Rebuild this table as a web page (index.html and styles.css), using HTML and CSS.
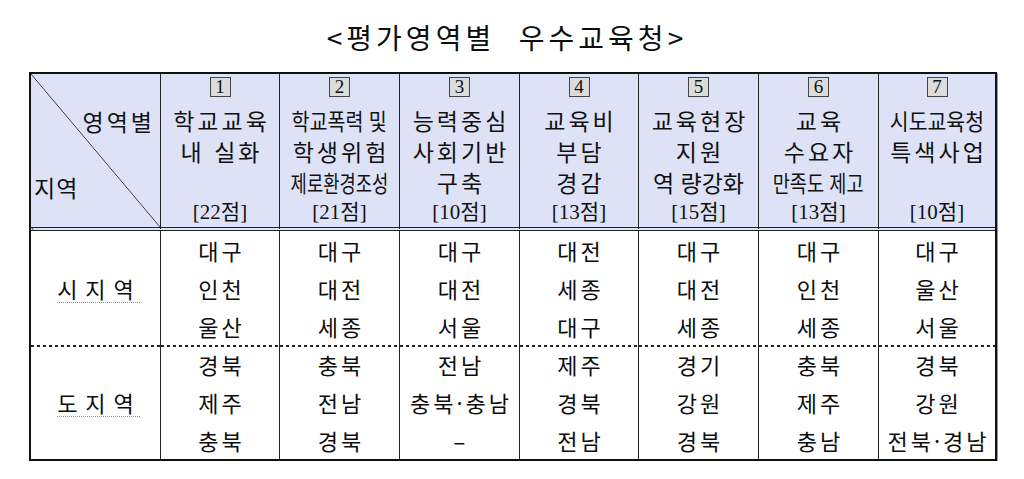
FILE: index.html
```html
<!DOCTYPE html>
<html lang="ko">
<head>
<meta charset="utf-8">
<title>평가영역별 우수교육청</title>
<link rel="stylesheet" href="styles.css">
</head>
<body>
<div class="title">&lt;평가영역별  우수교육청&gt;</div>
<div class="wrap">
<table class="grid">
<thead>
<tr>
<th class="c0 diag"><div class="dg"><div class="dg-top">영역별</div><div class="dg-bot">지역</div></div></th>
<th class="c1"><div class="hc"><span class="num">1</span><div class="ln">학교교육</div><div class="ln">내 실화</div><div class="pt">[22점]</div></div></th>
<th class="c2"><div class="hc"><span class="num">2</span><div class="ln cond85">학교폭력 및</div><div class="ln">학생위험</div><div class="ln cond77">제로환경조성</div><div class="pt">[21점]</div></div></th>
<th class="c3"><div class="hc"><span class="num">3</span><div class="ln">능력중심</div><div class="ln">사회기반</div><div class="ln">구축</div><div class="pt">[10점]</div></div></th>
<th class="c4"><div class="hc"><span class="num">4</span><div class="ln">교육비</div><div class="ln">부담</div><div class="ln">경감</div><div class="pt">[13점]</div></div></th>
<th class="c5"><div class="hc"><span class="num">5</span><div class="ln">교육현장</div><div class="ln">지원</div><div class="ln tight">역 량강화</div><div class="pt">[15점]</div></div></th>
<th class="c6"><div class="hc"><span class="num">6</span><div class="ln">교육</div><div class="ln">수요자</div><div class="ln cond81">만족도 제고</div><div class="pt">[13점]</div></div></th>
<th class="c7"><div class="hc"><span class="num">7</span><div class="ln cond89">시도교육청</div><div class="ln">특색사업</div><div class="pt">[10점]</div></div></th>
</tr>
</thead>
<tbody>
<tr><td rowspan="3" class="rg"><span class="ul">시지역</span></td><td>대구</td><td>대구</td><td>대구</td><td>대전</td><td>대구</td><td>대구</td><td>대구</td></tr>
<tr><td>인천</td><td>대전</td><td>대전</td><td>세종</td><td>대전</td><td>인천</td><td>울산</td></tr>
<tr><td>울산</td><td>세종</td><td>서울</td><td>대구</td><td>세종</td><td>세종</td><td>서울</td></tr>
<tr class="sep"><td rowspan="3" class="rg"><span class="ul">도지역</span></td><td>경북</td><td>충북</td><td>전남</td><td>제주</td><td>경기</td><td>충북</td><td>경북</td></tr>
<tr><td>제주</td><td>전남</td><td>충북·충남</td><td>경북</td><td>강원</td><td>제주</td><td>강원</td></tr>
<tr><td>충북</td><td>경북</td><td>–</td><td>전남</td><td>경북</td><td>충남</td><td>전북·경남</td></tr>
</tbody>
</table>
</div>
</body>
</html>
```
FILE: styles.css
```css
html, body {
  margin: 0;
  padding: 0;
  background: #ffffff;
}
body {
  font-family: "Noto Sans CJK KR", "Noto Sans", sans-serif;
  color: #0d0d0d;
}
.title {
  box-sizing: border-box;
  height: 72px;
  padding-top: 21px;
  padding-right: 10px;
  font-size: 28px;
  line-height: 32px;
  letter-spacing: 4px;
  text-align: center;
  white-space: pre;
}
.wrap {
  padding-left: 29px;
}
.grid {
  box-sizing: border-box;
  width: 968px;
  table-layout: fixed;
  border-collapse: separate;
  border-spacing: 0;
  border: 2px solid #111111;
  box-shadow: 1px 1px 0 #9a9a9a;
}
.grid th {
  box-sizing: border-box;
  padding: 0;
  vertical-align: top;
  background: #dee2f7;
  border-left: 1px solid #222222;
  border-bottom: 4px double #222222;
  font-weight: normal;
  font-family: "Liberation Serif", "Noto Sans CJK KR", serif;
  font-size: 23px;
  color: #111111;
}
.grid th.c0 { width: 129px; border-left: 0; }
.grid th.c1 { width: 119px; }
.grid th.c2 { width: 120px; }
.grid th.c3 { width: 120px; }
.grid th.c4 { width: 119px; }
.grid th.c5 { width: 120px; }
.grid th.c6 { width: 120px; }
.grid th.c7 { width: 117px; }

.grid th.diag {
  background: linear-gradient(to top right, #dee2f7 calc(50% - 0.7px), #333333 50%, #dee2f7 calc(50% + 0.7px));
}
.dg {
  height: 153px;
  display: flex;
  flex-direction: column;
  font-family: "Noto Sans CJK KR", sans-serif;
  letter-spacing: 3px;
  line-height: 30px;
}
.dg-top {
  margin-top: 32px;
  text-align: right;
  padding-right: 5px;
}
.dg-bot {
  margin-top: 36px;
  text-align: left;
  padding-left: 3px;
  letter-spacing: 1px;
}
.hc {
  height: 153px;
  box-sizing: border-box;
  padding-top: 3px;
  display: flex;
  flex-direction: column;
  align-items: center;
}
.num {
  display: block;
  box-sizing: border-box;
  width: 21px;
  height: 20px;
  border: 1px solid #444444;
  background: #dcdcdc;
  font-family: "Liberation Serif", serif;
  font-size: 19px;
  line-height: 18px;
  text-align: center;
  color: #111111;
}
.ln {
  white-space: nowrap;
  line-height: 31px;
  letter-spacing: 3px;
  padding-left: 3px;
  font-family: "Noto Sans CJK KR", sans-serif;
}
.hc .num + .ln {
  margin-top: 8px;
}
.tight { letter-spacing: 0; padding-left: 0; }
.cond85 { letter-spacing: 0; padding-left: 0; transform: scaleX(0.85); }
.cond77 { letter-spacing: 0; padding-left: 0; transform: scaleX(0.77); }
.cond81 { letter-spacing: 0; padding-left: 0; transform: scaleX(0.81); }
.cond89 { letter-spacing: 0; padding-left: 0; transform: scaleX(0.89); }
.pt {
  margin-top: auto;
  margin-bottom: 4px;
  font-size: 21px;
  line-height: 22px;
  white-space: nowrap;
}
.grid td {
  box-sizing: border-box;
  height: 38px;
  padding: 0 0 0 3px;
  border-left: 1px solid #222222;
  text-align: center;
  vertical-align: middle;
  white-space: nowrap;
  font-size: 22px;
  line-height: 38px;
  letter-spacing: 3px;
  overflow: visible;
}
.grid td.rg {
  border-left: 0;
  padding-left: 8px;
}
.ul {
  letter-spacing: 8px;
  text-decoration: underline dotted #cc8a22;
  text-decoration-thickness: 1px;
  text-underline-offset: 4px;
}
.grid tr.sep td {
  background: linear-gradient(to right, #222222 3px, transparent 3px) 0 0 / 6px 2px repeat-x;
}
```
